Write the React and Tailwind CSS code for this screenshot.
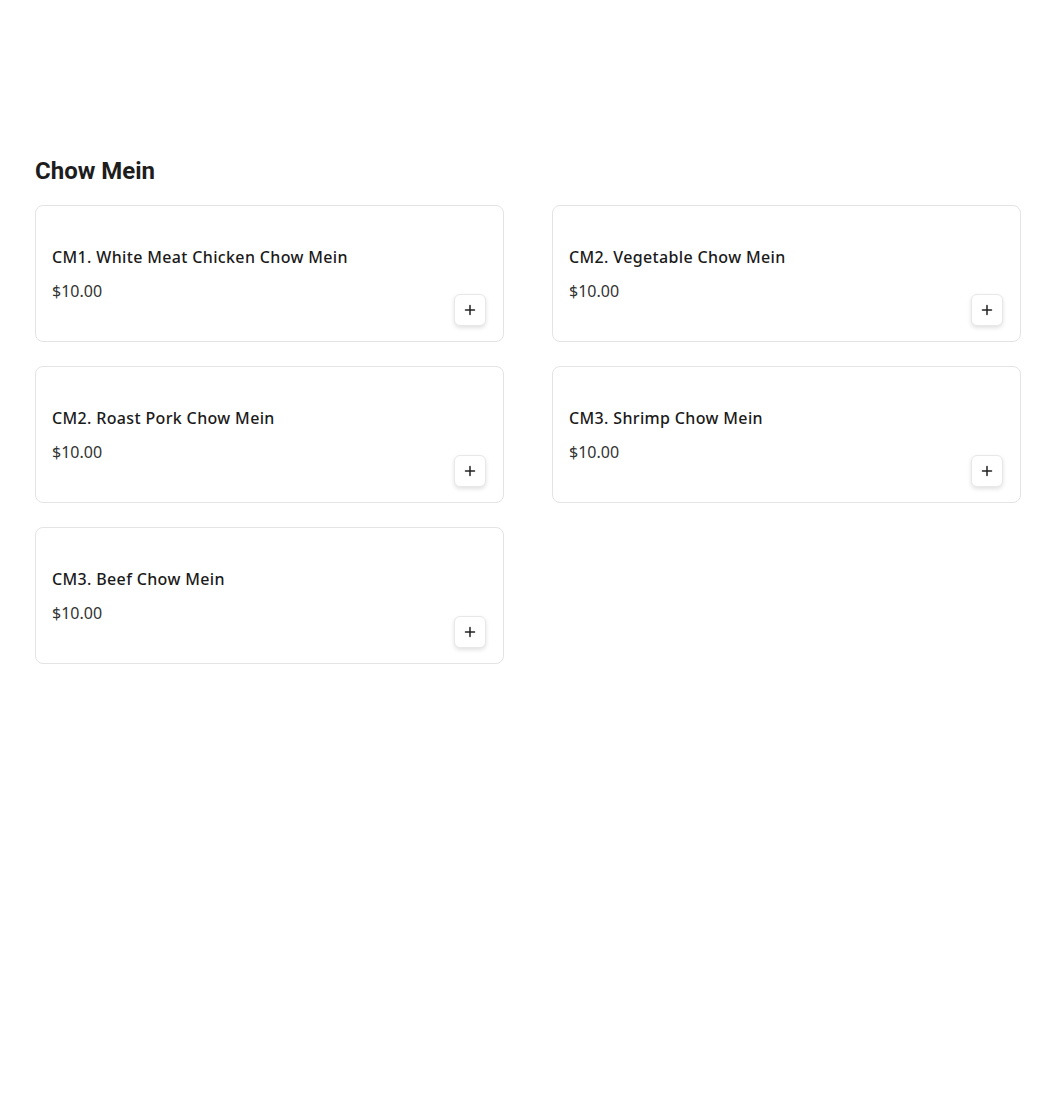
import React from "react";

const items = [
  "CM1. White Meat Chicken Chow Mein",
  "CM2. Vegetable Chow Mein",
  "CM2. Roast Pork Chow Mein",
  "CM3. Shrimp Chow Mein",
  "CM3. Beef Chow Mein",
];

function PlusIcon() {
  return (
    <svg width="12" height="12" viewBox="0 0 12 12" fill="none">
      <path d="M6 1.5v9M1.5 6h9" stroke="#222" strokeWidth="1.5" strokeLinecap="round" />
    </svg>
  );
}

function Card({ name }) {
  return (
    <div className="h-[137px] rounded-lg border border-[#e4e4e4] bg-white pl-4 pr-[17px] pt-[39px] pb-[15px] flex flex-col">
      <div className="text-[16px] leading-6 font-medium tracking-[0.35px] text-[#1a1a1a] font-['Noto_Sans',sans-serif]">
        {name}
      </div>
      <div className="mt-[10px] flex justify-between items-start">
        <div className="text-[16px] leading-6 text-[#333] font-['Noto_Sans',sans-serif]">$10.00</div>
        <button className="mt-[15px] w-8 h-8 flex items-center justify-center rounded-md border border-[#e8e8e8] bg-white shadow-[0_2px_4px_rgba(0,0,0,0.12)]">
          <PlusIcon />
        </button>
      </div>
    </div>
  );
}

export default function App() {
  return (
    <div className="min-h-[1106px] bg-white px-[35px] pt-[155px]">
      <h2 className="text-[24px] leading-8 font-bold text-[#1d1d1d] font-['Roboto',sans-serif]">Chow Mein</h2>
      <div className="mt-[18px] grid grid-cols-2 gap-x-[48px] gap-y-[24px] w-[986px]">
        {items.map((n, i) => (
          <Card key={i} name={n} />
        ))}
      </div>
    </div>
  );
}
